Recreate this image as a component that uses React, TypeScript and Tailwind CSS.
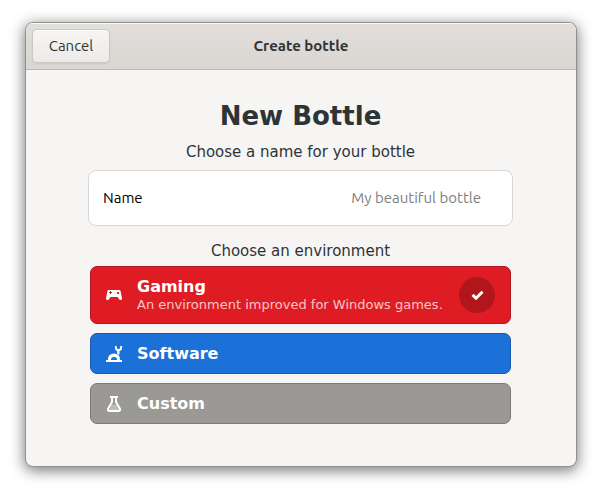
import { useState, type ReactNode } from "react";

const uiFont = "font-['Ubuntu','Noto_Sans','Open_Sans',sans-serif]";

function GamepadIcon() {
  return (
    <svg width="16" height="16" viewBox="0 0 16 16" fill="currentColor" aria-hidden="true">
      <path
        fillRule="evenodd"
        d="M3 3h10c.9 0 1.400.5 1.600 1.300L15.900 11c.2 1.300-.5 2-1.400 2-.8 0-1.300-.4-1.700-1.200L11.500 10H4.500L3.200 11.800C2.800 12.600 2.300 13 1.500 13 .6 13-.1 12.300.1 11L1.400 4.300C1.600 3.500 2.100 3 3 3zM4 4v1H3v1h1v1h1V6h1V5H5V4zM11 5v2h2V5z"
      />
    </svg>
  );
}

function EngineeringIcon() {
  return (
    <svg width="16" height="16" viewBox="0 0 16 16" fill="currentColor" aria-hidden="true">
      <path d="M0 14h16v2H0z" />
      <path fillRule="evenodd" d="M2 14.500V13a5.900 5.500 0 0 1 12 0v1.500h-3V13.500a3 2.500 0 0 0-6 0v1z" />
      <path d="M9 0v2.500C9 3.700 10 4.700 11.200 5V8.500h2.300V5C15 4.700 16 3.700 16 2.500V0h-1.800v2.300L13.200 3h-1.400L10.800 2.300V0z" />
    </svg>
  );
}

function FlaskIcon() {
  return (
    <svg width="16" height="16" viewBox="0 0 16 16" fill="none" stroke="currentColor" aria-hidden="true">
      <path d="M5.500 8.500h5l2.500 5.500H3z" fill="currentColor" fillOpacity="0.35" stroke="none" />
      <path d="M4 1h8" strokeWidth="2" />
      <path d="M6 1v5L2.200 12.500C1.500 14 2 15 3.500 15h9c1.500 0 2-1 1.300-2.500L10 6V1" strokeWidth="2" />
    </svg>
  );
}

function CheckIcon() {
  return (
    <svg width="16" height="16" viewBox="0 0 16 16" fill="none" stroke="currentColor" strokeWidth="3" aria-hidden="true">
      <path d="M3.500 7.800L7 11.200 13.500 4.800" />
    </svg>
  );
}

type Environment = {
  id: string;
  title: string;
  description?: string;
  icon: ReactNode;
  style: string;
};

const environments: Environment[] = [
  {
    id: "gaming",
    title: "Gaming",
    description: "An environment improved for Windows games.",
    icon: <GamepadIcon />,
    style: "h-[58px] border-[#b1171e] bg-[#df1c24]",
  },
  {
    id: "software",
    title: "Software",
    icon: <EngineeringIcon />,
    style: "h-[41px] border-[#1659ad] bg-[#1c71d8]",
  },
  {
    id: "custom",
    title: "Custom",
    icon: <FlaskIcon />,
    style: "h-[41px] border-[#7b7a77] bg-[#9a9996]",
  },
];

export default function App() {
  const [selected, setSelected] = useState("gaming");
  const [name, setName] = useState("");

  return (
    <div className="flex min-h-screen flex-col bg-white px-[25px] pt-[22px] pb-7 font-['DejaVu_Sans',sans-serif] text-[#2e3436]">
      <div className="flex flex-1 flex-col overflow-hidden rounded-lg border border-[#8f8f8e] bg-[#f6f5f4] shadow-[0_3px_14px_1px_rgba(0,0,0,0.5)]">
        <header
          className={`grid h-[47px] grid-cols-[1fr_auto_1fr] items-center border-b border-[#bfb8b1] bg-linear-to-b from-[#e1dedb] to-[#dad6d2] px-1.5 shadow-[inset_0_1px_0_#f9f8f7] ${uiFont}`}
        >
          <button
            type="button"
            className="h-[34px] w-[78px] justify-self-start rounded-[5px] border border-[#cdc7c2] bg-linear-to-b from-[#f6f5f4] to-[#edebe9] text-[15px] shadow-[inset_0_1px_0_#ffffff,0_1px_2px_rgba(0,0,0,0.07)]"
          >
            Cancel
          </button>
          <h1 className="text-[15px] font-bold">Create bottle</h1>
        </header>

        <main className="flex flex-col pt-7 pr-[63px] pb-10 pl-[62px]">
          <h2 className="text-center text-[26px] leading-9 font-bold">New Bottle</h2>
          <p className="mt-2 text-center text-[15px] leading-5">Choose a name for your bottle</p>

          <div
            className={`mt-2 flex h-14 items-center rounded-lg border border-[#d9d6d3] bg-white pr-[31px] pl-3.5 text-[15px] ${uiFont}`}
          >
            <label htmlFor="bottle-name" className="text-black">
              Name
            </label>
            <input
              id="bottle-name"
              value={name}
              onChange={(event) => setName(event.target.value)}
              placeholder="My beautiful bottle"
              className="min-w-0 flex-1 bg-transparent text-right outline-none placeholder:text-[#808080]"
            />
          </div>

          <p className="mt-[15px] text-center text-[15px] leading-5">Choose an environment</p>

          <div className="mx-0.5 mt-[5px] flex flex-col gap-[9px]">
            {environments.map((env) => (
              <button
                key={env.id}
                type="button"
                aria-pressed={selected === env.id}
                onClick={() => setSelected(env.id)}
                className={`flex items-center rounded-[7px] border px-[15px] text-left text-white ${env.style}`}
              >
                {env.icon}
                <span className="ml-[15px] flex min-w-0 flex-1 flex-col">
                  <span className="text-base leading-[18px] font-bold">{env.title}</span>
                  {env.description && (
                    <span className="text-[13px] leading-[17px] whitespace-nowrap text-white/75">
                      {env.description}
                    </span>
                  )}
                </span>
                {selected === env.id && (
                  <span className="flex size-9 items-center justify-center rounded-full bg-[#b2161d]">
                    <CheckIcon />
                  </span>
                )}
              </button>
            ))}
          </div>
        </main>
      </div>
    </div>
  );
}
